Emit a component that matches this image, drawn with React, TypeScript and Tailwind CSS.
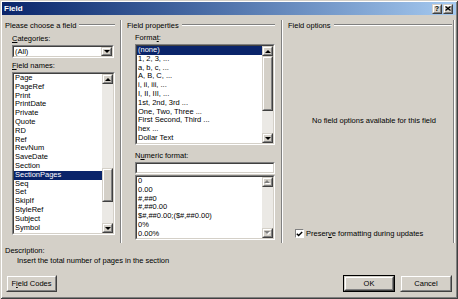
import React from "react";

function Raised({ className = "", children }: { className?: string; children?: React.ReactNode }) {
  return (
    <div className={`shrink-0 border border-t-[#d4d0c8] border-l-[#d4d0c8] border-r-[#404040] border-b-[#404040] ${className}`}>
      <div className="w-full h-full border border-t-white border-l-white border-r-[#808080] border-b-[#808080] bg-[#d4d0c8] flex items-center justify-center">
        {children}
      </div>
    </div>
  );
}

function Sunken({ className = "", children, inner = "bg-white" }: { className?: string; children?: React.ReactNode; inner?: string }) {
  return (
    <div className={`shrink-0 border border-t-[#808080] border-l-[#808080] border-r-white border-b-white ${className}`}>
      <div className={`w-full h-full border border-t-[#404040] border-l-[#404040] border-r-[#d4d0c8] border-b-[#d4d0c8] flex overflow-hidden ${inner}`}>
        {children}
      </div>
    </div>
  );
}

function Arrow({ up = false, disabled = false }: { up?: boolean; disabled?: boolean }) {
  const pts = up ? "0,3 6,3 3,0" : "0,0 6,0 3,3";
  if (disabled) {
    return (
      <svg width="7" height="4" viewBox="0 0 7 4">
        <polygon points={up ? "1,4 7,4 4,1" : "1,1 7,1 4,4"} fill="#ffffff" />
        <polygon points={pts} fill="#808080" />
      </svg>
    );
  }
  return (
    <svg width="6" height="3" viewBox="0 0 6 3">
      <polygon points={pts} fill="#000000" />
    </svg>
  );
}

function ScrollBar({ thumb, disabled = false }: { thumb?: string; disabled?: boolean }) {
  return (
    <div className="w-[11px] h-full shrink-0 flex flex-col bg-[#ebe9e5]">
      <Raised className="w-full h-[10px]">
        <Arrow up disabled={disabled} />
      </Raised>
      <div className="flex-1 flex flex-col">
        {thumb ? <Raised className={`w-full ${thumb}`} /> : null}
      </div>
      <Raised className="w-full h-[10px]">
        <Arrow disabled={disabled} />
      </Raised>
    </div>
  );
}

function GroupHeader({ title, className = "" }: { title: string; className?: string }) {
  return (
    <div className={`mt-[5px] h-[10px] shrink-0 flex items-center ${className}`}>
      <span className="whitespace-nowrap">{title}</span>
      <div className="flex-1 ml-[3px] h-[2px] border-t border-t-[#808080] border-b border-b-white" />
    </div>
  );
}

function VSep() {
  return <div className="w-[2px] mt-[5px] shrink-0 border-l border-l-[#808080] border-r border-r-white" />;
}

function ListItems({ items, selected }: { items: string[]; selected?: string }) {
  return (
    <div className="flex-1 flex flex-col overflow-hidden">
      {items.map((it) => (
        <div
          key={it}
          className={`h-[8.8px] leading-[8.8px] pl-[1px] whitespace-nowrap shrink-0 ${
            it === selected ? "bg-[#0a246a] text-white" : ""
          }`}
        >
          {it}
        </div>
      ))}
    </div>
  );
}

function PushButton({ children, className = "", def = false }: { children: React.ReactNode; className?: string; def?: boolean }) {
  if (def) {
    return (
      <div className={`border border-black ${className}`}>
        <Raised className="w-full h-full">{children}</Raised>
      </div>
    );
  }
  return <Raised className={className}>{children}</Raised>;
}

const fieldNames = [
  "Page",
  "PageRef",
  "Print",
  "PrintDate",
  "Private",
  "Quote",
  "RD",
  "Ref",
  "RevNum",
  "SaveDate",
  "Section",
  "SectionPages",
  "Seq",
  "Set",
  "SkipIf",
  "StyleRef",
  "Subject",
  "Symbol",
];

const formats = [
  "(none)",
  "1, 2, 3, ...",
  "a, b, c, ...",
  "A, B, C, ...",
  "i, ii, iii, ...",
  "I, II, III, ...",
  "1st, 2nd, 3rd ...",
  "One, Two, Three ...",
  "First Second, Third ...",
  "hex ...",
  "Dollar Text",
];

const numeric = ["0", "0.00", "#,##0", "#,##0.00", "$#,##0.00;($#,##0.00)", "0%", "0.00%"];

export default function App() {
  return (
    <div className="w-[458px] h-[299px] bg-[#d4d0c8] p-[2px] flex flex-col text-black font-['Liberation_Sans',Arial,sans-serif] text-[7.5px] leading-[9px] shadow-[inset_1px_1px_#d4d0c8,inset_-1px_-1px_#404040,inset_2px_2px_#ffffff,inset_-2px_-2px_#808080]">
      {/* Title bar */}
      <div className="h-[13px] shrink-0 flex items-center bg-linear-to-r from-[#0a246a] to-[#a6caf0] pl-[2px] pr-[3px]">
        <span className="text-white font-bold text-[8px] leading-[9px]">Field</span>
        <div className="ml-auto flex gap-[1px]">
          <Raised className="w-[10px] h-[10px]">
            <span className="font-bold text-[7px] leading-[6px]">?</span>
          </Raised>
          <Raised className="w-[10px] h-[10px]">
            <svg width="6" height="5" viewBox="0 0 6 5">
              <path d="M0.5 0.5 L5.5 4.5 M5.5 0.5 L0.5 4.5" stroke="#000" strokeWidth="1.3" />
            </svg>
          </Raised>
        </div>
      </div>

      {/* Body */}
      <div className="h-[228px] shrink-0 flex">
        {/* Column 1 */}
        <div className="w-[118px] shrink-0 flex flex-col">
          <GroupHeader title="Please choose a field" className="pl-[3px] pr-[5px]" />
          <div className="pl-[10px] flex flex-col">
            <div className="mt-[4px] h-[9px]">
              <span className="underline">C</span>ategories:
            </div>
            <Sunken className="mt-[2px] w-[102px] h-[13px]">
              <span className="flex-1 pl-[1px] leading-[9px]">(All)</span>
              <Raised className="w-[11px] h-full">
                <Arrow />
              </Raised>
            </Sunken>
            <div className="mt-[3px] h-[9px]">
              <span className="underline">F</span>ield names:
            </div>
            <Sunken className="mt-[2px] w-[103px] h-[163px]">
              <ListItems items={fieldNames} selected="SectionPages" />
              <ScrollBar thumb="mt-[84px] h-[34px]" />
            </Sunken>
          </div>
        </div>
        <VSep />

        {/* Column 2 */}
        <div className="w-[159px] shrink-0 flex flex-col">
          <GroupHeader title="Field properties" className="pl-[5px] pr-[6px]" />
          <div className="pl-[13px] flex flex-col">
            <div className="mt-[3px] h-[9px]">
              Forma<span className="underline">t</span>:
            </div>
            <Sunken className="mt-[2px] w-[140px] h-[101px]">
              <ListItems items={formats} selected="(none)" />
              <ScrollBar thumb="h-[55px]" />
            </Sunken>
            <div className="mt-[6px] h-[9px]">
              N<span className="underline">u</span>meric format:
            </div>
            <Sunken className="mt-[2px] w-[140px] h-[12px]" />
            <Sunken className="mt-[1px] w-[140px] h-[65px]">
              <ListItems items={numeric} />
              <ScrollBar disabled />
            </Sunken>
          </div>
        </div>
        <VSep />

        {/* Column 3 */}
        <div className="w-[170px] shrink-0 flex flex-col">
          <GroupHeader title="Field options" className="pl-[5px] pr-[1px]" />
          <div className="mt-[86px] ml-[29px] h-[9px] whitespace-nowrap">No field options available for this field</div>
          <div className="mt-[104px] ml-[12px] h-[9px] flex items-center gap-[2px]">
            <div className="w-[9px] h-[9px] shrink-0 border border-t-[#808080] border-l-[#808080] border-r-white border-b-white bg-white flex items-center justify-center">
              <svg width="7" height="6" viewBox="0 0 7 6">
                <path d="M0.8 2.8 L2.6 4.6 L6.2 1" stroke="#000" strokeWidth="1.4" fill="none" />
              </svg>
            </div>
            <span className="whitespace-nowrap">
              Preser<span className="underline">v</span>e formatting during updates
            </span>
          </div>
        </div>
        <VSep />
      </div>

      {/* Description */}
      <div className="mt-[3px] pl-[3px] h-[9px]">Description:</div>
      <div className="mt-[1px] pl-[15px] h-[9px]">Insert the total number of pages in the section</div>

      {/* Buttons */}
      <div className="mt-[10px] h-[17px] shrink-0 flex pl-[4px] pr-[4px]">
        <PushButton className="w-[51px] h-[17px]">
          <span>
            F<span className="underline">i</span>eld Codes
          </span>
        </PushButton>
        <div className="ml-auto flex gap-[5px]">
          <PushButton def className="w-[52px] h-[17px]">
            OK
          </PushButton>
          <PushButton className="w-[52px] h-[17px]">Cancel</PushButton>
        </div>
      </div>
    </div>
  );
}
